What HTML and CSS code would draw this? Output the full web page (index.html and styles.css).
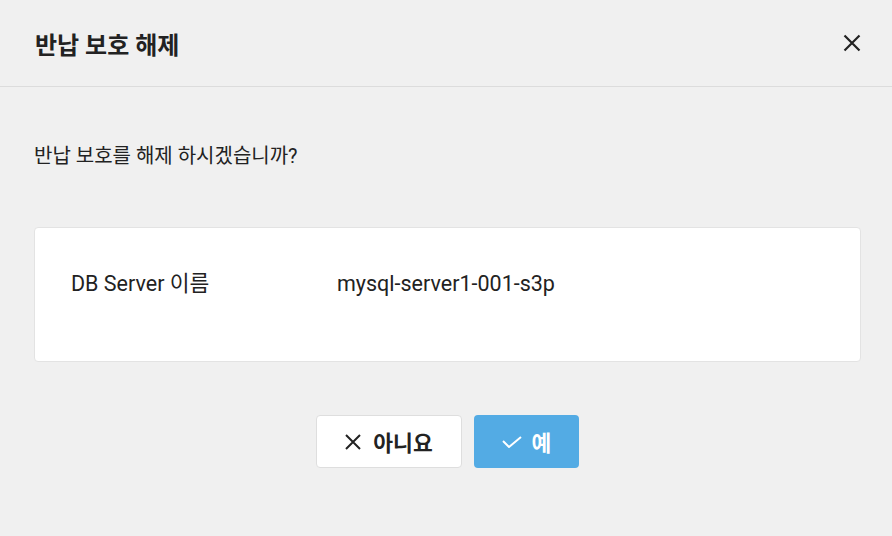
FILE: index.html
```html
<!DOCTYPE html>
<html lang="ko">
<head>
    <meta charset="UTF-8">
    <meta name="viewport" content="width=device-width, initial-scale=1.0">
    <title>반납 보호 해제</title>
    <link rel="stylesheet" href="styles.css">
</head>
<body>
    <div class="modal">
        <div class="modal-header">
            <h2 class="modal-title">반납 보호 해제</h2>
            <button class="close-button" title="닫기">
                <svg width="18" height="18" viewBox="0 0 18 18">
                    <path d="M1.5 1.5 L16.5 16.5 M16.5 1.5 L1.5 16.5" stroke="#222" stroke-width="2.2" fill="none"/>
                </svg>
            </button>
        </div>

        <div class="modal-body">
            <p class="message">반납 보호를 해제 하시겠습니까?</p>

            <div class="info-card">
                <div class="info-row">
                    <span class="info-label">DB Server 이름</span>
                    <span class="info-value">mysql-server1-001-s3p</span>
                </div>
            </div>

            <div class="button-group">
                <button class="btn btn-cancel">
                    <svg width="16" height="16" viewBox="0 0 16 16">
                        <path d="M1 1 L15 15 M15 1 L1 15" stroke="#222" stroke-width="2" fill="none"/>
                    </svg>
                    아니요
                </button>
                <button class="btn btn-confirm">
                    <svg width="20" height="12" viewBox="0 0 20 12">
                        <path d="M1 5 L7 11 L19 1" stroke="#fff" stroke-width="2" fill="none"/>
                    </svg>
                    예
                </button>
            </div>
        </div>
    </div>
</body>
</html>
```

FILE: styles.css
```css
body {
    margin: 0;
    background: #f0f0f0;
    font-family: Roboto, 'Noto Sans CJK KR', sans-serif;
    color: #222;
}

.modal {
    width: 892px;
    height: 536px;
    background: #f0f0f0;
}

.modal-header {
    height: 86px;
    border-bottom: 1px solid #dcdcdc;
    display: flex;
    align-items: center;
    justify-content: space-between;
    padding: 0 31px 0 35px;
}

.modal-title {
    margin: 0;
    font-size: 24px;
    font-weight: bold;
    color: #222;
}

.close-button {
    background: none;
    border: none;
    padding: 0;
    width: 18px;
    height: 18px;
    cursor: pointer;
    display: flex;
}

.modal-body {
    padding: 57px 31px 0 34px;
}

.message {
    margin: 0;
    font-size: 20px;
    line-height: 24px;
    color: #222;
}

.info-card {
    margin-top: 59px;
    background: #fff;
    border: 1px solid #e3e3e3;
    border-radius: 4px;
    padding: 44px 36px 65px;
}

.info-row {
    display: flex;
    font-size: 21.5px;
    line-height: 24px;
    color: #222;
}

.info-label {
    width: 266px;
}

.button-group {
    margin-top: 53px;
    display: flex;
    justify-content: center;
    gap: 12px;
}

.btn {
    height: 53px;
    display: flex;
    align-items: center;
    justify-content: center;
    gap: 12px;
    font-family: Roboto, 'Noto Sans CJK KR', sans-serif;
    font-size: 21.5px;
    font-weight: bold;
    border-radius: 4px;
    cursor: pointer;
}

.btn-cancel {
    width: 146px;
    background: #fff;
    color: #222;
    border: 1px solid #dedede;
}

.btn-confirm {
    width: 105px;
    background: #53abe4;
    color: #fff;
    border: none;
    gap: 10px;
}
```
